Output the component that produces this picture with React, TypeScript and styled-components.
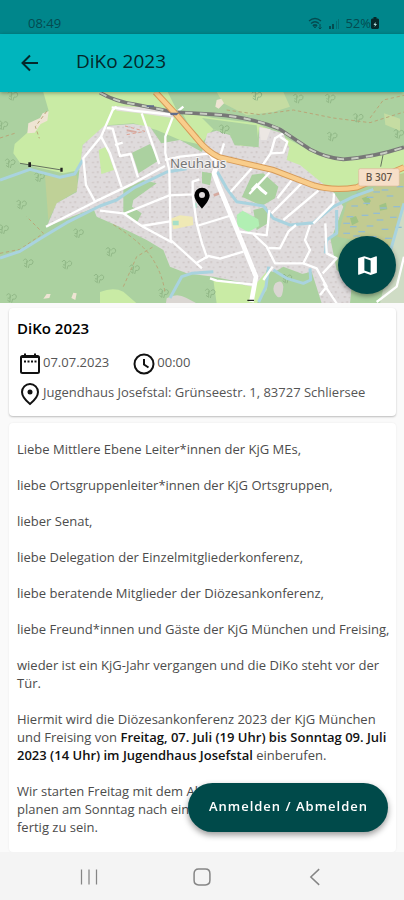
import React from 'react';
import styled, { createGlobalStyle } from 'styled-components';

const GlobalStyle = createGlobalStyle`
  *, *::before, *::after { box-sizing: border-box; }
  body { margin: 0; background: #fafafa; font-family: 'Open Sans', 'Noto Sans', sans-serif; color: #000; }
  h1, h2, p { margin: 0; }
  button { border: 0; padding: 0; background: none; font: inherit; color: inherit; cursor: pointer; }
`;

const Screen = styled.div`
  min-height: 100vh;
  display: flex;
  flex-direction: column;
`;

const StatusBar = styled.div`
  height: 34px;
  padding: 12px 25px 0 28px;
  display: flex;
  align-items: center;
  justify-content: space-between;
  background: #00868b;
  color: #044b50;
  font-size: 13px;
  line-height: 20px;
`;

const StatusIcons = styled.div`
  display: flex;
  align-items: center;
  gap: 5px;
`;

const Charge = styled.span`
  display: flex;
  align-items: center;
`;

const AppBar = styled.header`
  position: relative;
  height: 58px;
  padding: 0 18px;
  display: flex;
  align-items: center;
  gap: 34px;
  background: #00b5bd;
  color: #04282b;
  box-shadow: 0 1px 4px rgba(0, 0, 0, 0.35);
  z-index: 1;
`;

const BackButton = styled.button`
  display: flex;
  width: 24px;
  height: 24px;
`;

const BarTitle = styled.h1`
  padding-bottom: 4px;
  font-size: 19px;
  line-height: 24px;
  font-weight: 400;
`;

const MapArea = styled.section`
  position: relative;
  height: 211px;
`;

const MapSvg = styled.svg`
  display: block;
  width: 100%;
  height: 100%;
`;

const MapButton = styled.button`
  position: absolute;
  right: 8px;
  bottom: 9px;
  width: 58px;
  height: 58px;
  display: flex;
  align-items: center;
  justify-content: center;
  border-radius: 50%;
  background: #004a4a;
  color: #fff;
  box-shadow: 0 2px 5px rgba(0, 0, 0, 0.4);
`;

const Content = styled.main`
  flex: 1;
  padding: 5px 8px 0 9px;
  display: flex;
  flex-direction: column;
  gap: 7px;
`;

const Card = styled.section`
  padding: 10px 8px 7px;
  border-radius: 4px;
  background: #fff;
  box-shadow: 0 1px 2px rgba(0, 0, 0, 0.25);
`;

const CardTitle = styled.h2`
  margin-bottom: 11px;
  font-size: 15px;
  line-height: 20px;
  font-weight: 600;
`;

const InfoRow = styled.div`
  display: flex;
  gap: 22px;
  height: 30px;
`;

const Info = styled.div`
  display: flex;
  gap: 1px;
  padding-left: 1px;
  color: #555;
  font-size: 13px;
  line-height: 26px;

  svg { margin-top: 3px; color: #111; flex: none; }
`;

const Letter = styled.article`
  flex: 1;
  padding: 17px 4px 16px 8px;
  display: flex;
  flex-direction: column;
  gap: 18px;
  border-radius: 4px;
  background: #fff;
  box-shadow: 0 0 2px rgba(0, 0, 0, 0.08);
  color: #4c4c4c;
  font-size: 13px;
  line-height: 18px;

  strong { color: #111; font-weight: 600; }
`;

const SignUpButton = styled.button`
  position: fixed;
  right: 16px;
  bottom: 68px;
  height: 49px;
  padding: 0 20px 3px 21px;
  border-radius: 25px;
  background: #004a4a;
  color: #fff;
  font-size: 13px;
  font-weight: 600;
  letter-spacing: 1px;
  box-shadow: 0 3px 6px rgba(0, 0, 0, 0.4);
  z-index: 2;
`;

const NavBar = styled.nav`
  position: sticky;
  bottom: 0;
  height: 49px;
  padding: 0 32px;
  display: grid;
  grid-template-columns: repeat(3, 1fr);
  place-items: center;
  background: #f4f4f4;
  color: #858585;
  z-index: 1;

  button { display: flex; }
`;

const Outline = ({ d, size = 24, width = 2 }: { d: string; size?: number; width?: number }) => (
  <svg width={size} height={size} viewBox="0 0 24 24" fill="none" stroke="currentColor" strokeWidth={width} aria-hidden="true">
    <path d={d} />
  </svg>
);

const trees = [
  [38, 18], [30, 220], [118, 262], [64, 344], [10, 418], [84, 520], [200, 524], [235, 430], [332, 486],
  [403, 538], [296, 566], [34, 624], [490, 610], [8, 106], [672, 118], [894, 26], [990, 26], [1074, 84],
  [996, 140], [1196, 132], [770, 18], [860, 566], [630, 610],
];

const homes =
  'M248 165 L312 108 L400 102 L450 110 L484 160 L540 150 L606 186 L622 130 L650 122 L690 136 L704 166 L776 172 L778 110 L850 130 L868 174 L860 210 L900 225 L945 262 L1000 306 L1030 350 L1000 430 L1010 480 L1060 540 L1050 640 L960 640 L930 560 L850 530 L800 560 L776 620 L720 576 L640 560 L560 550 L510 530 L490 480 L440 450 L390 425 L340 402 L290 380 L280 355 L140 410 L170 340 L230 306 Z';

const minorRoads = [
  'M138 410 L285 335 L400 280 L495 228', 'M285 335 L258 285 L250 205 L303 140 L338 60 L350 50',
  'M303 140 L330 190 L365 292', 'M320 114 L338 116 L360 198 L392 192 L414 262', 'M345 165 L368 158',
  'M425 70 L478 222', 'M518 82 L496 140 L496 190 L508 240 L512 450 L606 535', 'M495 210 L540 200 L634 190',
  'M370 372 L508 316 L578 313 L578 275 L598 268', 'M300 362 L370 370 L425 408 L518 458', 'M425 408 L510 394',
  'M578 313 L590 400 L606 460 L622 505', 'M590 408 L688 378', 'M588 520 L625 498 L660 506 L730 485',
  'M788 225 L812 190 L825 145 L850 130', 'M812 190 L850 188 L862 155 L840 140', 'M660 200 L672 160',
  'M692 305 L756 234', 'M748 312 L810 246', 'M776 290 L800 312', 'M815 370 L910 275', 'M850 390 L955 302',
  'M832 325 L882 262', 'M720 425 L800 436 L804 400 L808 360', 'M760 432 L800 470 L825 520 L910 520 L930 480 L915 450 L930 405',
  'M818 530 L790 570', 'M805 474 L840 475 L865 425 L888 405', 'M910 520 L950 535 L980 590 L960 615', 'M968 550 L1010 505 L980 490 L976 400',
  'M1002 310 L1000 340 L940 400', 'M630 565 L650 572 L760 584', 'M1130 636 L1190 590 L1212 500', 'M970 580 L1010 640',
];

const water = [
  'M0 270 L90 238 L180 262 L224 252 L248 210', 'M0 504 L60 484 L130 440 L200 398 L300 348 L350 330 L405 292 L500 246 L560 236',
  'M510 624 L545 560 L575 550 L640 545', 'M652 245 L680 295 L710 335 L790 348 L820 385 L870 405 L940 398 L1000 350 L1060 320 L1120 298',
  'M1010 360 L1010 430 L980 450 L976 490', 'M776 636 L798 590 L806 530', 'M820 540 L860 565 L910 580 L932 570 L930 535', 'M1172 480 L1212 340',
];

const dashes = [
  [1070, 310], [1120, 306], [1160, 318], [1054, 348], [1090, 340], [1140, 354], [1180, 350], [1040, 380], [1085, 376],
  [1130, 390], [1170, 382], [1050, 410], [1100, 408], [1145, 418], [1185, 412], [1060, 438], [1110, 440], [1155, 445],
  [1190, 290], [1030, 400], [1030, 430], [1075, 425], [1120, 370], [1100, 322], [1145, 300],
];

const railway = 'M300 8 Q345 34 400 42 L520 66 L640 73 Q760 82 840 118 L930 178 Q980 204 1030 208 Q1120 202 1212 172';
const mainRoad = 'M466 6 L530 75 L590 145 Q620 184 658 202 L820 240 L940 286 Q1000 304 1070 292 L1212 232';

const TownMap = () => (
  <MapSvg viewBox="0 6 1212 633" preserveAspectRatio="xMidYMid slice" role="img" aria-label="Karte von Neuhaus">
    <defs>
      <pattern id="houses" width="34" height="30" patternUnits="userSpaceOnUse">
        <rect width="34" height="30" fill="#dfdbdc" />
        <path d="M4 5h6v5h-6z M19 3h5v7h-5z M11 18h7v5h-7z M27 20h4v5h-4z" fill="#d0c9c8" />
      </pattern>
    </defs>
    <rect y="0" width="1212" height="645" fill="#abd1a0" />
    <path d="M128 0 L146 62 L85 125 L44 162 L40 190 L60 218 L110 232 L190 250 L240 240 L248 165 L320 106 L400 100 L470 120 L540 150 L606 165 L540 80 L500 0 Z" fill="#c9eba5" />
    <path d="M545 66 L640 84 L770 100 L870 150 L960 198 L1040 212 L1212 174 L1212 250 L1080 270 L1060 300 L960 305 L860 214 L850 140 L778 110 L770 160 L720 168 L690 130 L640 118 L600 165 Z" fill="#c9eba5" />
    <path d="M552 60 L620 12 L660 70 Z M606 84 L770 106 L776 168 L706 166 L690 130 L640 118 Z" fill="#abd1a0" />
    <path d="M650 6 L850 6 L870 50 L820 66 L740 76 L670 40 Z M1152 70 L1200 86 L1200 122 L1156 104 Z" fill="#c5dca2" />
    <path d="M135 258 L230 256 L236 300 L172 338 L145 390 Z" fill="#bfd197" />
    <path d="M146 64 L128 70 L120 84 L85 100 L82 130 L104 128 L122 102 L142 92 Z M650 30 l14 -4 8 14 -16 16 -10 -6z M140 612 l12 0 -4 12 -18 2z M220 608 l10 2 -4 20 -12 -6z" fill="#eee4d3" />
    <path d="M300 606 Q340 590 370 605 L410 640 L300 640 Z" fill="#c9eba5" />
    <path d={homes} fill="url(#houses)" />
    <path d="M340 48 L430 52 L540 72 L518 84 L420 70 L350 62 Z" fill="#e3dfdd" />
    <path d="M396 188 L450 162 L478 210 L416 250 Z M370 300 L430 270 L470 280 L400 330 L396 350 L425 370 L410 400 L370 372 Z M726 320 L756 254 L790 250 L835 290 L825 325 L785 348 Z M606 245 L636 250 L630 286 L606 280 Z M760 360 L800 350 L804 400 L770 420 Z M990 440 L1040 440 L1100 600 L1010 540 Z M800 540 L870 560 L935 545 L965 640 L770 640 Z M606 575 L700 590 L740 640 L606 640 Z" fill="#abd1a0" />
    <path d="M296 180 L318 170 L342 240 L304 252 Z M640 570 L760 590 L804 540 L800 600 L770 640 L650 640 Z" fill="#c9eba5" />
    <path d="M778 112 L812 118 L800 150 L782 150 Z M726 354 L750 350 L754 370 L730 366 Z" fill="#ece7e3" />
    <path d="M710 375 L728 362 L775 388 L778 408 L745 426 L712 408 Z" fill="#b1efb3" />
    <path d="M512 386 L540 376 L578 380 L580 405 L520 418 Z" fill="#efe9b5" />
    <path d="M518 392 h18 v14 h-18z M1188 430 h24 v18 h-24z M1184 464 h28 v20 h-28z M580 340 h10 v14 h-10z" fill="#a6dfc9" />
    <path d="M640 312 l18 -6 v8 l-16 6z M380 118 l30 6 v5 l-30 -5z" fill="#d6aaa0" />
    <path d="M826 580 q20 -14 24 10 q-2 40 -18 30 q-20 -20 -6 -40z M500 625 q30 -18 58 -2 l30 16 h-90z" fill="#dad6d2" />
    <path d="M1040 340 L1110 300 L1180 260 L1212 250 L1212 350 L1175 470 L1090 455 L1012 440 Z" fill="#c2cb91" />
    <path d="M1085 325 l18 -6 10 14 -12 14z M1138 346 l20 -8 4 20 -22 4z M1050 384 l18 -6 8 18 -20 10z" fill="#9fc384" />
    <path d="M1180 460 L1212 350 L1212 640 L1140 640 Z" fill="#cfdcc5" />
    <g stroke="#95bdd0" strokeWidth="4">{dashes.map(([x, y]) => <path key={`${x}-${y}`} d={`M${x} ${y} h20`} />)}</g>
    <g fill="none" stroke="#91b887" strokeWidth="3">
      {trees.map(([x, y]) => <path key={`${x}-${y}`} d={`M${x - 14} ${y - 8} q6 -10 12 0 q0 12 -9 8 M${x - 4} ${y - 8} v20 M${x + 2} ${y - 6} q8 -10 13 0 q0 12 -11 9 l-3 11 M${x - 12} ${y + 6} l8 6`} />)}
    </g>
    <g fill="none" stroke="#b9a678" strokeWidth="3" strokeDasharray="10 8">
      <path d="M340 404 Q430 460 460 510 T495 610" />
      <path d="M0 490 L60 478 L130 430 L80 380" />
      <path d="M370 590 L410 500 L460 470" />
      <path d="M680 60 L780 74 L880 60 L1000 84 L1110 98 L1212 66" />
      <path d="M140 64 L106 110 L118 145" />
      <path d="M375 108 L435 124 L380 134" stroke="#dda294" />
      <path d="M0 144 L44 130 M1110 84 L1150 30 L1212 16" />
    </g>
    <g fill="none" stroke="#a9d3df" strokeWidth="9" strokeLinejoin="round">{water.map((d) => <path key={d} d={d} />)}</g>
    <g fill="none" stroke="#fff" strokeWidth="7" strokeLinejoin="round">{minorRoads.map((d) => <path key={d} d={d} />)}</g>
    <path d="M756 300 L770 285 L784 300 L800 312" fill="none" stroke="#fff" strokeWidth="9" />
    <path d="M335 52 L400 62 L520 75 L550 50" fill="none" stroke="#fff" strokeWidth="7" />
    <path d="M624 180 L652 222 L642 250 L655 285 L705 405 L768 560 L754 636" fill="none" stroke="#fff" strokeWidth="14" strokeLinejoin="round" />
    <path d="M60 220 L185 240 M1150 190 l-8 40" fill="none" stroke="#667360" strokeWidth="3" />
    <path d="M85 217h8v14h-8z M181 233h7v12h-7z M742 629h20v4h-20z" fill="#222" />
    <g fill="none">
      <path d={railway} stroke="#777" strokeWidth="11" />
      <path d={railway} stroke="#c9cec4" strokeWidth="6" strokeDasharray="22 22" />
      <path d={mainRoad} stroke="#d69a58" strokeWidth="19" />
      <path d={mainRoad} stroke="#f9cd8b" strokeWidth="13" />
    </g>
    <path d="M510 68h28l-8 8h-18z M440 46h22v5h-22z" fill="#626d8c" />
    <rect x="1076" y="236" width="122" height="52" rx="5" fill="#f6dfc8" stroke="#dcb99a" strokeWidth="2" />
    <text x="1137" y="273" textAnchor="middle" fontFamily="Noto Sans, sans-serif" fontSize="30" fontWeight="500" fill="#5e5144">B 307</text>
    <text x="594" y="234" textAnchor="middle" fontFamily="Noto Sans, sans-serif" fontSize="40" fill="#767676" stroke="#f4f2f1" strokeWidth="6" paintOrder="stroke">Neuhaus</text>
    <path d="M606 293 a23 23 0 0 1 23 23 c0 17 -23 40 -23 40 s-23 -23 -23 -40 a23 23 0 0 1 23 -23z M606 306 a9 9 0 1 0 0 18 a9 9 0 0 0 0 -18z" fill="#000" fillRule="evenodd" />
  </MapSvg>
);

const greetings = [
  'Liebe Mittlere Ebene Leiter*innen der KjG MEs,',
  'liebe Ortsgruppenleiter*innen der KjG Ortsgruppen,',
  'lieber Senat,',
  'liebe Delegation der Einzelmitgliederkonferenz,',
  'liebe beratende Mitglieder der Diözesankonferenz,',
  'liebe Freund*innen und Gäste der KjG München und Freising,',
  'wieder ist ein KjG-Jahr vergangen und die DiKo steht vor der Tür.',
];

export default function App() {
  return (
    <Screen>
      <GlobalStyle />
      <StatusBar>
        <span>08:49</span>
        <StatusIcons>
          <svg width="16" height="13" viewBox="0 0 16 13" fill="none" stroke="currentColor" strokeWidth="1.4" aria-hidden="true">
            <path d="M1 4 Q7 -1 13 4 M3 6.500 Q7 3 11 6.500 M5 9 Q7 7 9 9" />
            <path d="M7 11l-2-3h4z M12 7v5 M10.500 10.500l1.500 1.500 1.500-1.500" strokeWidth="1" />
          </svg>
          <svg width="11" height="11" viewBox="0 0 11 11" fill="currentColor" aria-hidden="true">
            <path d="M0 8h2v3h-2z M3 6h2v5h-2z" />
            <path d="M7 3h1v8h-1z M9 1h1v10h-1z" opacity=".4" />
          </svg>
          <Charge>
            52%
            <svg width="8" height="12" viewBox="0 0 8 12" aria-hidden="true">
              <path d="M2.500 0h3v1.500h1.500l1 1v8.500l-1 1h-6l-1-1v-8.500l1-1h1.500z" fill="#06282a" />
              <path d="M4.500 5l-2 3h1.500l-.5 2 2.500-3h-1.500z" fill="#b7e0e0" />
            </svg>
          </Charge>
        </StatusIcons>
      </StatusBar>
      <AppBar>
        <BackButton type="button" aria-label="Zurück"><Outline d="M20 12H5 M12 4.500L4.500 12L12 19.500" /></BackButton>
        <BarTitle>DiKo 2023</BarTitle>
      </AppBar>
      <MapArea>
        <TownMap />
        <MapButton type="button" aria-label="Karte öffnen">
          <svg width="25" height="25" viewBox="0 0 24 24" fill="currentColor" aria-hidden="true">
            <path d="M20.500 3l-.16.030L15 5.100 9 3 3.360 4.900c-.21.070-.36.250-.36.480V20.500c0 .28.220.5.500.5l.16-.030L9 18.900l6 2.100 5.640-1.900c.21-.070.36-.25.360-.48V3.500c0-.28-.22-.5-.5-.5zM15 19l-6-2.110V5l6 2.110V19z" />
          </svg>
        </MapButton>
      </MapArea>
      <Content>
        <Card>
          <CardTitle>DiKo 2023</CardTitle>
          <InfoRow>
            <Info>
              <svg width="24" height="24" viewBox="0 0 24 24" fill="none" stroke="currentColor" strokeWidth="2" aria-hidden="true">
                <rect x="3" y="4" width="18" height="17" rx="1.500" />
                <path d="M3 5h18 M7 1.500v3 M17 1.500v3" />
                <path d="M6 9.500h13" strokeDasharray="2 1.500" />
              </svg>
              <span>07.07.2023</span>
            </Info>
            <Info>
              <Outline d="M12 2.500a9.500 9.500 0 1 1 0 19a9.500 9.500 0 0 1 0-19z M12 7v5.500l4.500 3" />
              <span>00:00</span>
            </Info>
          </InfoRow>
          <InfoRow>
            <Info>
              <svg width="24" height="24" viewBox="0 0 24 24" fill="none" stroke="currentColor" strokeWidth="2" aria-hidden="true">
                <path d="M12 2a8 8 0 0 1 8 8c0 5.500-8 12-8 12s-8-6.500-8-12a8 8 0 0 1 8-8z" />
                <circle cx="12" cy="10" r="2.500" fill="currentColor" stroke="none" />
              </svg>
              <span>Jugendhaus Josefstal: Grünseestr. 1, 83727 Schliersee</span>
            </Info>
          </InfoRow>
        </Card>
        <Letter>
          {greetings.map((line) => <p key={line}>{line}</p>)}
          <p>
            Hiermit wird die Diözesankonferenz 2023 der KjG München und Freising von{' '}
            <strong>Freitag, 07. Juli (19 Uhr) bis Sonntag 09. Juli 2023 (14 Uhr) im Jugendhaus Josefstal</strong> einberufen.
          </p>
          <p>
            Wir starten Freitag mit dem Abendessen und<br />
            planen am Sonntag nach einem Mittagessen<br />
            fertig zu sein.
          </p>
        </Letter>
      </Content>
      <SignUpButton type="button">Anmelden / Abmelden</SignUpButton>
      <NavBar aria-label="System">
        <button type="button" aria-label="Letzte Apps"><Outline size={20} width={1.5} d="M3 3v18 M12 3v18 M21 3v18" /></button>
        <button type="button" aria-label="Startseite">
          <Outline size={20} width={1.8} d="M8 2.500h8q5.500 0 5.500 5.500v8q0 5.500-5.500 5.500h-8q-5.500 0-5.500-5.500v-8q0-5.500 5.500-5.500z" />
        </button>
        <button type="button" aria-label="Zurück zur vorigen Ansicht"><Outline size={20} width={1.8} d="M17 2.500L7 12L17 21.500" /></button>
      </NavBar>
    </Screen>
  );
}
